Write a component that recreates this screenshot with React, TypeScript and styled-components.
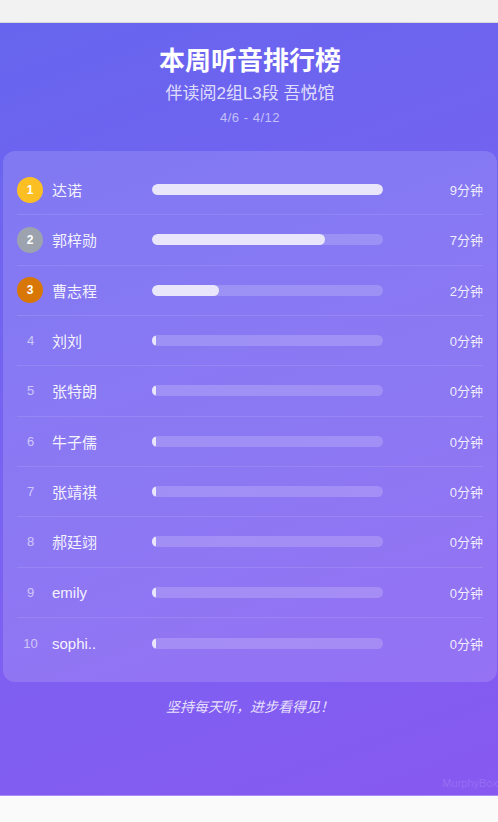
import { ReactElement } from 'react';
import styled, { createGlobalStyle } from 'styled-components';

const GlobalStyle = createGlobalStyle`
  html, body {
    margin: 0;
    padding: 0;
    background: #fafafa;
  }
  body {
    font-family: 'Liberation Sans', 'Noto Sans CJK SC', sans-serif;
  }
`;

const TopBar = styled.div`
  height: 22px;
  background: #f2f2f2;
  border-bottom: 1px solid #d8d8d8;
`;

const Poster = styled.div`
  position: relative;
  overflow: hidden;
  height: 773px;
  box-sizing: border-box;
  padding: 22px 1px 0 3px;
  display: flex;
  flex-direction: column;
  align-items: center;
  background: linear-gradient(160deg, #6765ef 0%, #7a62f2 55%, #8759f1 100%);
  border-bottom: 1px solid #a98cf6;
`;

const Title = styled.h1`
  margin: 0;
  font-size: 26px;
  line-height: 32px;
  font-weight: 700;
  color: #ffffff;
`;

const Subtitle = styled.p`
  margin: 6px 0 0;
  font-size: 17px;
  line-height: 22px;
  color: rgba(255, 255, 255, 0.8);
`;

const DateRange = styled.p`
  margin: 5px 0 0;
  font-size: 13px;
  line-height: 16px;
  letter-spacing: 0.5px;
  color: rgba(255, 255, 255, 0.6);
`;

const Card = styled.div`
  align-self: stretch;
  margin-top: 25px;
  padding: 14px 14px;
  border-radius: 12px;
  background: rgba(255, 255, 255, 0.14);
`;

const Row = styled.div`
  display: grid;
  grid-template-columns: 35px 100px 1fr 100px;
  align-items: center;
  height: 50.33px;
  box-sizing: border-box;
  border-bottom: 1px solid rgba(255, 255, 255, 0.1);

  &:last-child {
    border-bottom: none;
  }
`;

const medalColors: Record<number, string> = {
  1: '#fbbf24',
  2: '#9ca3af',
  3: '#d97706',
};

const Medal = styled.span<{ $rank: number }>`
  width: 26px;
  height: 26px;
  border-radius: 50%;
  display: flex;
  align-items: center;
  justify-content: center;
  background: ${(p) => medalColors[p.$rank]};
  color: #ffffff;
  font-size: 12px;
  font-weight: 700;
`;

const RankNumber = styled.span`
  width: 27px;
  text-align: center;
  font-size: 13px;
  color: rgba(255, 255, 255, 0.6);
`;

const Name = styled.span`
  font-size: 15px;
  color: rgba(255, 255, 255, 0.92);
  white-space: nowrap;
`;

const Track = styled.div`
  height: 11px;
  border-radius: 6px;
  background: rgba(255, 255, 255, 0.18);
  overflow: hidden;
`;

const Fill = styled.div`
  height: 100%;
  min-width: 4px;
  border-radius: 6px;
  background: #e9e6fb;
`;

const Minutes = styled.span`
  text-align: right;
  font-size: 13px;
  color: rgba(255, 255, 255, 0.88);
`;

const Footer = styled.p`
  margin: 15px 0 0;
  font-size: 14px;
  line-height: 20px;
  font-style: italic;
  color: rgba(255, 255, 255, 0.82);
`;

const Watermark = styled.span`
  position: absolute;
  right: 0;
  bottom: 6px;
  font-size: 11px;
  color: rgba(255, 255, 255, 0.14);
`;

const BottomBar = styled.div`
  height: 25px;
  background: #fafafa;
`;

const ranking = [
  { name: '达诺', minutes: 9, pct: 100 },
  { name: '郭梓勋', minutes: 7, pct: 75 },
  { name: '曹志程', minutes: 2, pct: 29 },
  { name: '刘刘', minutes: 0, pct: 0 },
  { name: '张特朗', minutes: 0, pct: 0 },
  { name: '牛子儒', minutes: 0, pct: 0 },
  { name: '张靖祺', minutes: 0, pct: 0 },
  { name: '郝廷翊', minutes: 0, pct: 0 },
  { name: 'emily', minutes: 0, pct: 0 },
  { name: 'sophi..', minutes: 0, pct: 0 },
];

export default function App(): ReactElement {
  return (
    <>
      <GlobalStyle />
      <TopBar />
      <Poster>
        <Title>本周听音排行榜</Title>
        <Subtitle>伴读阅2组L3段 吾悦馆</Subtitle>
        <DateRange>4/6 - 4/12</DateRange>
        <Card>
          {ranking.map((r, i) => {
            const rank = i + 1;
            return (
              <Row key={r.name}>
                {rank <= 3 ? <Medal $rank={rank}>{rank}</Medal> : <RankNumber>{rank}</RankNumber>}
                <Name>{r.name}</Name>
                <Track>
                  <Fill style={{ width: `${r.pct}%` }} />
                </Track>
                <Minutes>{r.minutes}分钟</Minutes>
              </Row>
            );
          })}
        </Card>
        <Footer>坚持每天听，进步看得见！</Footer>
        <Watermark>MurphyBox</Watermark>
      </Poster>
      <BottomBar />
    </>
  );
}
